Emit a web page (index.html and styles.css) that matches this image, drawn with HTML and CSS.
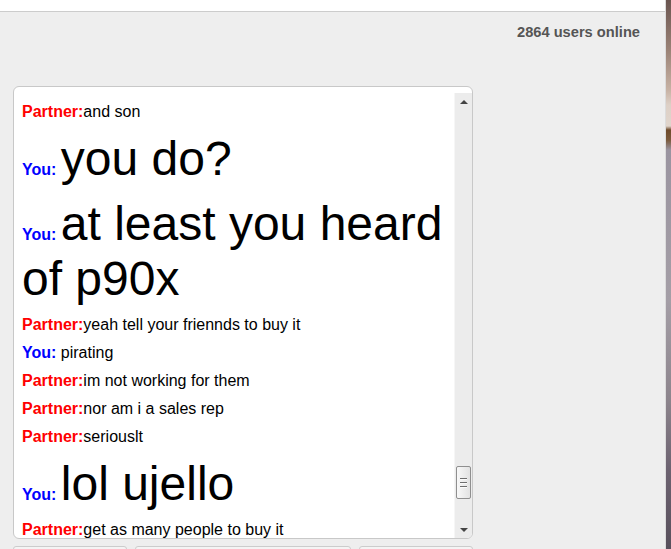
FILE: index.html
```html
<!DOCTYPE html>
<html>
<head>
<meta charset="utf-8">
<link rel="stylesheet" href="styles.css">
</head>
<body>
<div class="page">
  <div class="topbar"></div>
  <div class="status">2864 users online</div>
  <div class="chatbox">
    <div class="log">
      <div class="msg"><span class="partner">Partner:</span>and son</div>
      <div class="msg"><span class="you">You: </span><span class="big">you do?</span></div>
      <div class="msg"><span class="you">You: </span><span class="big">at least you heard of p90x</span></div>
      <div class="msg"><span class="partner">Partner:</span>yeah tell your friennds to buy it</div>
      <div class="msg"><span class="you">You: </span>pirating</div>
      <div class="msg"><span class="partner">Partner:</span>im not working for them</div>
      <div class="msg"><span class="partner">Partner:</span>nor am i a sales rep</div>
      <div class="msg"><span class="partner">Partner:</span>seriouslt</div>
      <div class="msg"><span class="you">You: </span><span class="big">lol ujello</span></div>
      <div class="msg"><span class="partner">Partner:</span>get as many people to buy it</div>
    </div>
    <div class="scrollbar">
      <div class="arrow up"></div>
      <div class="track">
        <div class="thumb"><span class="grip"></span><span class="grip"></span><span class="grip"></span></div>
      </div>
      <div class="arrow down"></div>
    </div>
  </div>
  <div class="buttons">
    <div class="btn small"></div>
    <div class="btn wide"></div>
    <div class="btn small"></div>
  </div>
</div>
<div class="desktop"></div>
</body>
</html>
```
FILE: styles.css
```css
html, body {
  margin: 0;
  padding: 0;
}
body {
  display: flex;
  width: 671px;
  height: 549px;
  overflow: hidden;
  font-family: "Liberation Sans", Arial, sans-serif;
  background: #eeeeee;
}
.page {
  width: 665px;
  height: 549px;
  background: #eeeeee;
  border-right: 1px solid #dcdcdc;
  overflow: hidden;
}
.topbar {
  height: 11px;
  background: #ffffff;
  border-bottom: 1px solid #cccccc;
}
.status {
  padding: 12px 25px 0 0;
  height: 17px;
  line-height: 17px;
  text-align: right;
  font-weight: bold;
  font-size: 11pt;
  color: #555555;
}
.chatbox {
  margin: 45px 0 0 13px;
  width: 458px;
  height: 451px;
  border: 1px solid #c8c8c8;
  border-radius: 6px;
  background: #ffffff;
  display: flex;
  overflow: hidden;
}
.log {
  flex: 1;
  overflow: hidden;
  padding: 16px 0 0 8px;
  display: flex;
  flex-direction: column;
  gap: 10px;
  font-size: 16px;
  color: #000000;
}
.msg {
  flex: none;
}
.partner {
  color: #ff0000;
  font-weight: bold;
}
.you {
  color: #0000ff;
  font-weight: bold;
}
.big {
  font-size: 48px;
}
.scrollbar {
  width: 17px;
  margin-top: 6px;
  background: #ececec;
  border-left: 1px solid #f6f6f6;
  display: flex;
  flex-direction: column;
}
.arrow {
  height: 17px;
  display: flex;
  align-items: center;
  justify-content: center;
}
.arrow::before {
  content: "";
  width: 0;
  height: 0;
  border-left: 4px solid transparent;
  border-right: 4px solid transparent;
}
.arrow.up::before {
  border-bottom: 4px solid #444444;
}
.arrow.down::before {
  border-top: 4px solid #444444;
}
.track {
  flex: 1;
  padding-top: 356px;
  display: flex;
  justify-content: center;
}
.thumb {
  width: 13px;
  height: 31px;
  border: 1px solid #8f8f8f;
  border-radius: 2px;
  background: linear-gradient(to right, #f8f8f8, #e2e2e2);
  display: flex;
  flex-direction: column;
  align-items: center;
  justify-content: center;
  gap: 2px;
}
.grip {
  width: 7px;
  height: 1px;
  background: #6e6e6e;
  border-bottom: 1px solid #fafafa;
}
.buttons {
  display: flex;
  gap: 8px;
  margin: 7px 0 0 13px;
}
.btn {
  height: 30px;
  border: 1px solid #cccccc;
  border-radius: 3px;
  background: #f4f4f4;
}
.btn.small {
  width: 112px;
}
.btn.wide {
  width: 214px;
}
.desktop {
  width: 5px;
  height: 549px;
  background: linear-gradient(to bottom,
    #6a5550 0px,
    #9a8276 50px,
    #c7b2a4 90px,
    #ddd0c6 105px,
    #e0d5cc 126px,
    #6e4a2a 130px,
    #7a5a3c 140px,
    #9a94a0 150px,
    #a49ea6 300px,
    #8c848c 400px,
    #6c6270 470px,
    #58505c 549px);
}
```
